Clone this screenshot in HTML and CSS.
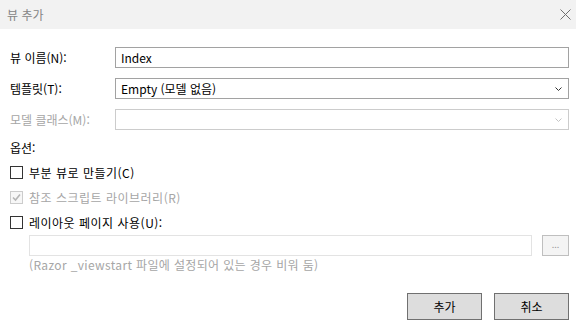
FILE: index.html
```html
<!DOCTYPE html>
<html lang="ko">
<head>
    <meta charset="UTF-8">
    <title>뷰 추가</title>
    <link rel="stylesheet" href="styles.css">
</head>
<body>
    <div class="dialog">
        <div class="titlebar">
            <span class="title">뷰 추가</span>
            <svg class="close" width="11" height="11" viewBox="0 0 11 11">
                <path d="M0.5 0.5 L10.5 10.5 M10.5 0.5 L0.5 10.5" stroke="#6f6f6f" stroke-width="1" fill="none"/>
            </svg>
        </div>

        <div class="content">
            <div class="fields">
                <label class="label">뷰 이름(N):</label>
                <div class="input">Index</div>

                <label class="label">템플릿(T):</label>
                <div class="input select">
                    <span>Empty (모델 없음)</span>
                    <svg class="arrow" width="7" height="4" viewBox="0 0 7 4">
                        <path d="M0.5 0.5 L3.5 3.5 L6.5 0.5" stroke="#333" stroke-width="1" fill="none"/>
                    </svg>
                </div>

                <label class="label disabled">모델 클래스(M):</label>
                <div class="input select is-disabled">
                    <span></span>
                    <svg class="arrow" width="7" height="4" viewBox="0 0 7 4">
                        <path d="M0.5 0.5 L3.5 3.5 L6.5 0.5" stroke="#c4c4c4" stroke-width="1" fill="none"/>
                    </svg>
                </div>
            </div>

            <div class="section-title">옵션:</div>

            <div class="checks">
                <div class="check-row">
                    <span class="checkbox"></span>
                    <span>부분 뷰로 만들기(C)</span>
                </div>
                <div class="check-row disabled">
                    <span class="checkbox checked">
                        <svg width="11" height="11" viewBox="0 0 11 11">
                            <path d="M2 5.5 L4.5 8 L9 2.5" stroke="#b5b5b5" stroke-width="1.6" fill="none"/>
                        </svg>
                    </span>
                    <span>참조 스크립트 라이브러리(R)</span>
                </div>
                <div class="check-row">
                    <span class="checkbox"></span>
                    <span>레이아웃 페이지 사용(U):</span>
                </div>
            </div>

            <div class="layout-row">
                <div class="input faint"></div>
                <div class="browse">...</div>
            </div>
            <div class="hint">(Razor _viewstart 파일에 설정되어 있는 경우 비워 둠)</div>

            <div class="actions">
                <div class="button">추가</div>
                <div class="button">취소</div>
            </div>
        </div>
    </div>
</body>
</html>
```

FILE: styles.css
```css
* {
    margin: 0;
    padding: 0;
    box-sizing: border-box;
}

body {
    font-family: "Noto Sans CJK KR", "Noto Sans", sans-serif;
    font-size: 12px;
    color: #000000;
    background: #ffffff;
    width: 576px;
    height: 323px;
    overflow: hidden;
}

.titlebar {
    height: 29px;
    background: #f2f2f2;
    display: flex;
    align-items: center;
    justify-content: space-between;
    padding: 0 5px 0 7px;
}

.title {
    color: #858585;
    line-height: 16px;
}

.close {
    display: block;
    margin-top: -1px;
}

.content {
    padding: 18px 7px 0 10px;
}

.fields {
    display: grid;
    grid-template-columns: 105px 1fr;
    grid-auto-rows: 21px;
    row-gap: 10px;
    align-items: center;
}

.label {
    line-height: 16px;
}

.disabled {
    color: #a6a6a6;
}

.input {
    height: 21px;
    border: 1px solid #a2a2a2;
    padding: 0 5px;
    line-height: 19px;
    display: flex;
    align-items: center;
    justify-content: space-between;
}

.input.is-disabled {
    border-color: #cccccc;
}

.input.faint {
    border-color: #e3e3e3;
}

.select .arrow {
    display: block;
    margin-right: 1px;
}

.section-title {
    margin-top: 10px;
    line-height: 16px;
}

.checks {
    margin-top: 10px;
    display: flex;
    flex-direction: column;
    gap: 12px;
}

.check-row {
    height: 13px;
    display: flex;
    align-items: center;
    gap: 6px;
    line-height: 16px;
    letter-spacing: 0.5px;
}

.checkbox {
    width: 13px;
    height: 13px;
    border: 1px solid #333333;
    background: #ffffff;
    display: flex;
    align-items: center;
    justify-content: center;
    flex: none;
}

.checkbox.checked {
    border-color: #cccccc;
    background: #f7f7f7;
}

.layout-row {
    margin: 6px 0 0 19px;
    display: flex;
    gap: 10px;
}

.layout-row .input {
    flex: 1;
}

.browse {
    width: 27px;
    height: 21px;
    border: 1px solid #bfbfbf;
    background: #f4f4f4;
    color: #9a9a9a;
    font-size: 9px;
    line-height: 17px;
    text-align: center;
}

.hint {
    margin: 1px 0 0 19px;
    line-height: 16px;
    color: #a6a6a6;
    letter-spacing: 0.35px;
}

.actions {
    margin-top: 20px;
    display: flex;
    justify-content: flex-end;
    gap: 12px;
}

.button {
    width: 75px;
    height: 27px;
    background: #dddddd;
    border: 1px solid #707070;
    line-height: 25px;
    text-align: center;
}
```
